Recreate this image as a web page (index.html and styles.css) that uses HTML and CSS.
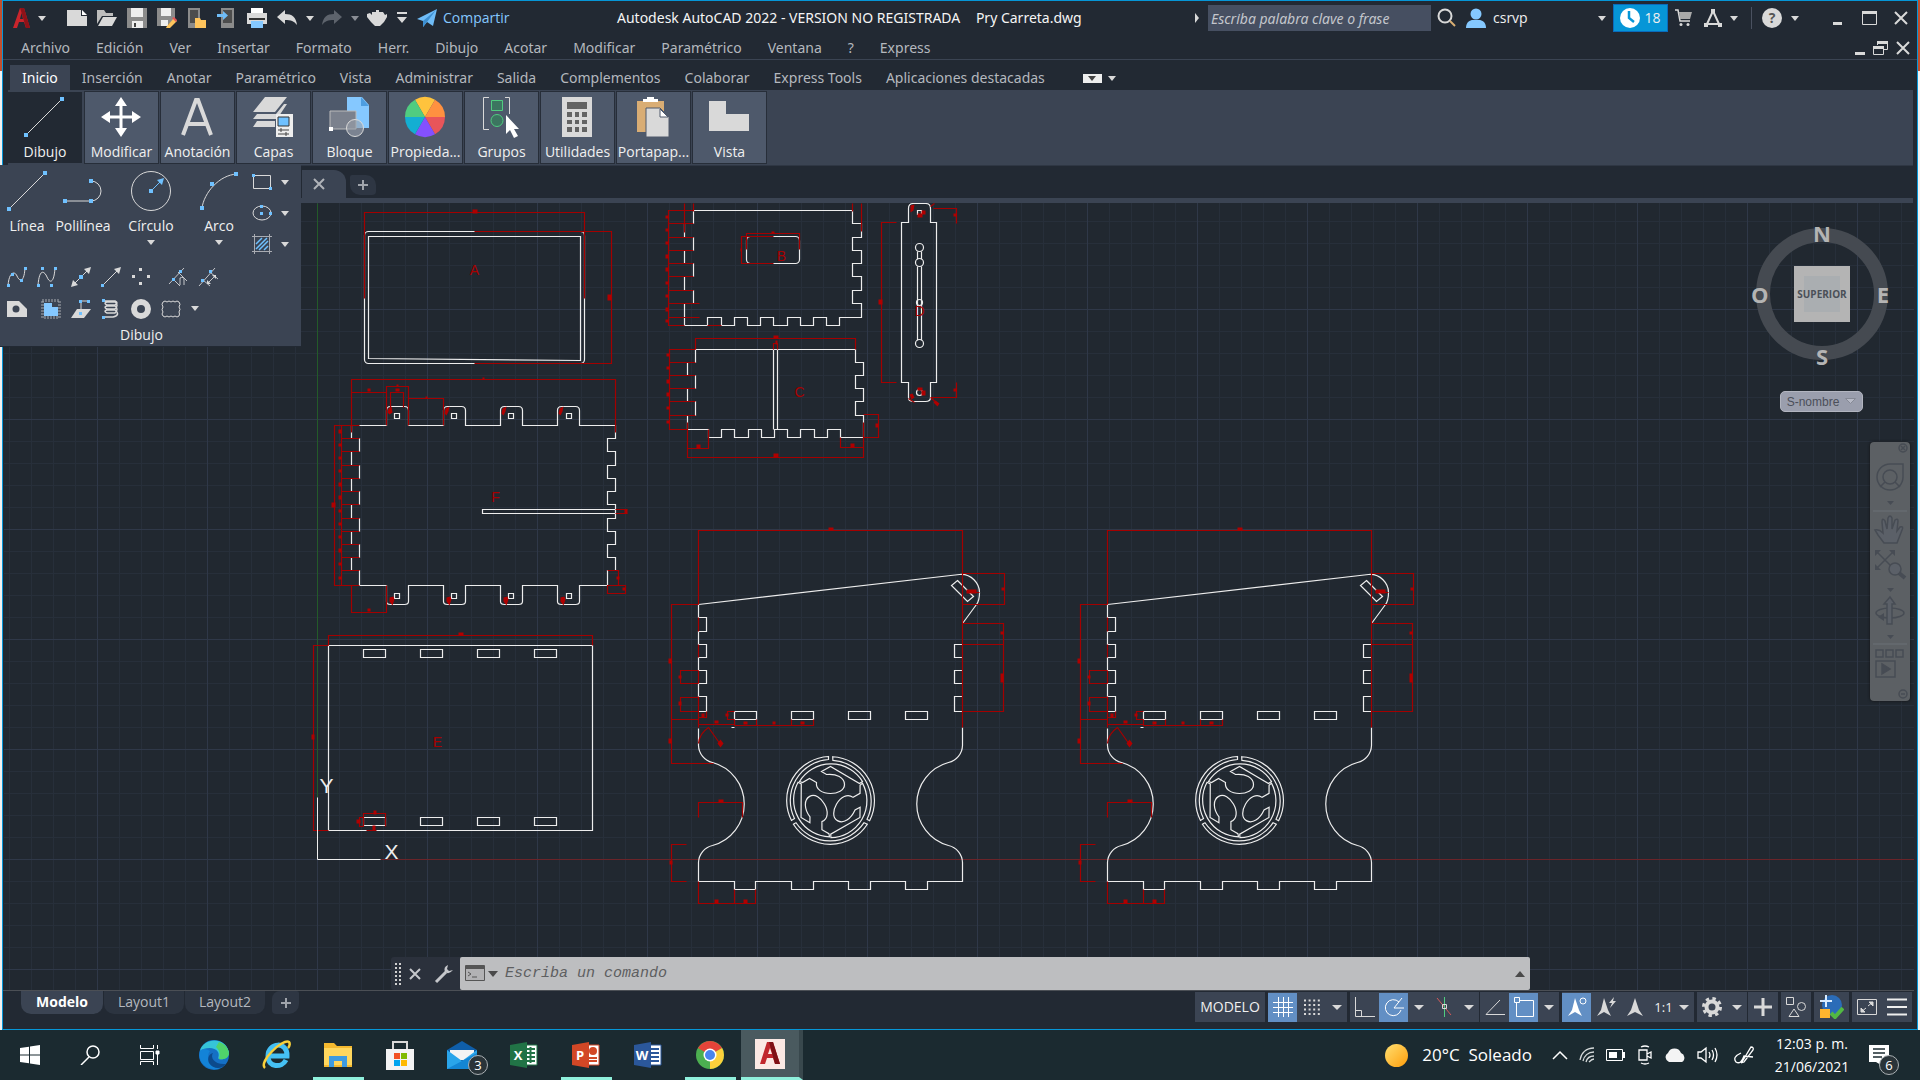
FILE: index.html
```html
<!DOCTYPE html>
<html lang="es">
<head>
  <meta charset="UTF-8" />
  <title>Autodesk AutoCAD 2022 - Pry Carreta.dwg</title>
  <link rel="stylesheet" href="styles.css">
</head>
<body>
<div class="desktop">
  <div class="app">

    <!-- Barra de título -->
    <header class="titlebar">
      <div class="quick">
        <button class="app-logo" aria-label="Menú de la aplicación">
          <svg width="18" height="22" viewBox="0 0 18 22"><path d="M0 21L7 1h4l6 20h-4l-2-6H6l-2 6z" fill="#c9252c"/><path d="M7 1h4l6 20h-4L8 4z" fill="#8e1218"/><path d="M7 12h3L8.500 6z" fill="#222933"/></svg>
          <i class="caret"></i>
        </button>
        <button aria-label="Nuevo"><svg width="20" height="20"><path d="M0 2h14v6h6v10H0z" fill="#d9d9d9"/><path d="M15 2l5 5h-5z" fill="#fff"/></svg></button>
        <button aria-label="Abrir"><svg width="20" height="20"><path d="M0 2h7l2 3h7v3H5L0 16z" fill="#bdbdbd"/><path d="M6 9h14l-5 9H1z" fill="#d9d9d9"/></svg></button>
        <button aria-label="Guardar"><svg width="20" height="20"><path d="M0 0h20v20H0z" fill="#8b8b8b"/><path d="M4 0h12v9H4zM5 13h11v7H5z" fill="#eee"/><path d="M7 15h2v4H7z" fill="#444"/></svg></button>
        <button aria-label="Guardar como"><svg width="20" height="20"><path d="M0 0h18v10l-8 8H0z" fill="#8b8b8b"/><path d="M4 0h10v8H4zM4 12h7v6H4z" fill="#eee"/><path d="M10 18l7-8 3 3-7 7-4 0z" fill="#ffc45c"/><path d="M17 9l3 3-1 2-4-4z" fill="#e45656"/></svg></button>
        <button aria-label="Abrir desde web"><svg width="20" height="20"><path d="M1 0h12v20H1z" fill="#8b8b8b"/><path d="M3 2h8v13H3z" fill="#4d4d4d"/><path d="M8 10h5l1 2h5v8H8z" fill="#ffc45c"/></svg></button>
        <button aria-label="Guardar en web"><svg width="20" height="20"><path d="M4 0h13v20H4z" fill="#8b8b8b"/><path d="M6 2h9v13H6z" fill="#4d4d4d"/><path d="M0 6h6V3l5 4.500L6 12V9H0z" fill="#6fbcf7"/></svg></button>
        <button aria-label="Imprimir"><svg width="20" height="20"><path d="M4 0h12v6H4z" fill="#fff"/><path d="M0 5h20v11H0z" fill="#d9d9d9"/><path d="M2 10h16v2H2z" fill="#333"/><path d="M4 13h12v7H4z" fill="#85c8ff"/></svg></button>
        <button aria-label="Deshacer"><svg width="20" height="20"><path d="M0 9l8-7v4c7 0 11 3 12 11-3-4-6-5-12-5v4z" fill="#d9d9d9"/></svg></button>
        <i class="caret"></i>
        <button aria-label="Rehacer"><svg width="20" height="20"><path d="M20 9l-8-7v4C5 6 1 9 0 17c3-4 6-5 12-5v4z" fill="#5d636c"/></svg></button>
        <i class="caret dim-caret"></i>
        <button aria-label="Renderizar"><svg width="20" height="20"><path d="M9 2h3v2h4l2 3 2-1v3l-3 5-4 4H8l-4-4-4-5V6l3-1 2 2V4h4z" fill="#d9d9d9"/></svg></button>
        <button class="more" aria-label="Personalizar"><svg width="10" height="14"><path d="M0 1h10v2H0zM0 6h10l-5 6z" fill="#d9d9d9"/></svg></button>
        <button class="share"><svg width="20" height="20"><path d="M0 11L20 1l-4 17-6-4-4 5V13z" fill="#6fbcf7"/><path d="M6 13l13-11-9 12-4 5z" fill="#3d8fd1"/></svg>Compartir</button>
      </div>
      <h1>Autodesk AutoCAD 2022 - VERSION NO REGISTRADA <span>Pry Carreta.dwg</span></h1>
      <div class="session">
        <svg width="5" height="10"><path d="M0 0l4 5-4 5z" fill="#d9d9d9"/></svg>
        <input class="search" type="text" aria-label="Buscar" placeholder="Escriba palabra clave o frase">
        <button class="find" aria-label="Buscar ayuda"><svg width="20" height="20" fill="none"><circle cx="8" cy="8" r="6.500" stroke="#d9d9d9" stroke-width="2"/><path d="M13 13l5 5" stroke="#d9ae73" stroke-width="2"/></svg></button>
        <button class="user"><svg width="20" height="20"><circle cx="10" cy="6" r="5.500" fill="#85c8ff"/><path d="M0 20c0-6 4-8 7-8h6c3 0 7 2 7 8z" fill="#85c8ff"/></svg><span>csrvp</span><i class="caret"></i></button>
        <button class="trial"><svg width="20" height="20" fill="none"><circle cx="10" cy="10" r="10" fill="#fff"/><path d="M9 3v7l5 4" stroke="#0696d7" stroke-width="2.500"/></svg>18</button>
        <button class="cart" aria-label="Tienda"><svg width="17" height="18" fill="none"><path d="M0 1h3l2 11h10" stroke="#d9d9d9" stroke-width="1.500"/><path d="M4 3h13l-2 7H5z" fill="#a9a9a9"/><circle cx="6" cy="15.500" r="1.500" fill="#d9d9d9"/><circle cx="13" cy="15.500" r="1.500" fill="#d9d9d9"/></svg></button>
        <button class="hub" aria-label="Aplicaciones"><svg width="20" height="20" fill="none" stroke="#d9d9d9" stroke-linejoin="round"><path d="M10 3L4 16h12z" stroke-width="2"/><path d="M10 1v4M1 17h4M15 17h4" stroke-width="4"/></svg><i class="caret"></i></button>
        <button class="help" aria-label="Ayuda"><svg width="20" height="20"><circle cx="10" cy="10" r="10" fill="#d9d9d9"/><text x="10" y="15" font-size="14" font-weight="bold" text-anchor="middle" fill="#555">?</text></svg><i class="caret"></i></button>
        <div class="win">
          <button aria-label="Minimizar"><svg width="14" height="14"><path d="M2 11h9v3H2z" fill="#d9d9d9"/></svg></button>
          <button aria-label="Maximizar"><svg width="15" height="14"><path d="M.5 1v12.500h14V1z" fill="none" stroke="#d9d9d9" /><path d="M0 0h15v3H0z" fill="#d9d9d9"/></svg></button>
          <button aria-label="Cerrar"><svg width="14" height="14"><path d="M1 1l12 12M13 1L1 13" stroke="#d9d9d9" stroke-width="2"/></svg></button>
        </div>
      </div>
    </header>

    <!-- Menú -->
    <nav class="menubar">
      <a href="#">Archivo</a><a href="#">Edición</a><a href="#">Ver</a><a href="#">Insertar</a><a href="#">Formato</a><a href="#">Herr.</a><a href="#">Dibujo</a><a href="#">Acotar</a><a href="#">Modificar</a><a href="#">Paramétrico</a><a href="#">Ventana</a><a href="#">?</a><a href="#">Express</a>
      <div class="docwin">
        <button aria-label="Minimizar dibujo"><svg width="10" height="14"><path d="M0 11h10v3H0z" fill="#d9d9d9"/></svg></button>
        <button aria-label="Restaurar dibujo"><svg width="15" height="14" fill="none" stroke="#d9d9d9"><path d="M4.500 4V1h10v7.500H11M.5 6v7.500h10V6"/><path d="M4 1.500h11M0 6.500h11" stroke-width="3"/></svg></button>
        <button aria-label="Cerrar dibujo"><svg width="14" height="14"><path d="M1 1l12 12M13 1L1 13" stroke="#d9d9d9" stroke-width="2"/></svg></button>
      </div>
    </nav>

    <!-- Cinta de opciones -->
    <nav class="tabs">
      <a class="active" href="#">Inicio</a><a href="#">Inserción</a><a href="#">Anotar</a><a href="#">Paramétrico</a><a href="#">Vista</a><a href="#">Administrar</a><a href="#">Salida</a><a href="#">Complementos</a><a href="#">Colaborar</a><a href="#">Express Tools</a><a href="#">Aplicaciones destacadas</a>
      <button class="ribbon-mode" aria-label="Minimizar cinta"><span><i class="caret dark"></i></span><i class="caret"></i></button>
    </nav>
    <div class="ribbon">
      <button class="open"><svg width="40" height="40"><path d="M2 38L38 2" stroke="#d9d9d9"/><path d="M0 36h4v4H0zM36 0h4v4h-4z" fill="#6fc1ff"/></svg>Dibujo</button>
      <button><svg width="40" height="40"><path d="M18.500 8h3v10.500H32v3H21.500V32h-3V21.500H8v-3h10.500z" fill="#fff"/><path d="M20 0l6 9H14zM20 40l6-9H14zM0 20l9-6v12zM40 20l-9-6v12z" fill="#fff"/></svg>Modificar</button>
      <button><svg width="40" height="40" fill="none" stroke="#d9d9d9" stroke-width="4"><path d="M6 38L19 3h2l13 35M11 27h18"/></svg>Anotación</button>
      <button><svg width="40" height="40"><path d="M12 0h22L22 15H0zM4 17h19l8-10h3L24 22H0zM4 24h18v6H0z" fill="#d9d9d9"/><path d="M23 17h17v23H23z" fill="#eee"/><path d="M25 20h11v9H25z" fill="#6fc1ff" stroke="#333"/><path d="M25 33h11M25 37h11M28 31v4M33 35v4" stroke="#444"/></svg>Capas</button>
      <button><svg width="40" height="40"><path d="M18 0h15l7 8v23H18z" fill="#85c8ff"/><path d="M32 0v9h8z" fill="#4d9de0"/><path d="M1 14h26v18H1z" fill="#7b818d" stroke="#bbb"/><circle cx="26" cy="31" r="8.500" fill="#9aa0aa" fill-opacity=".6" stroke="#d9d9d9"/><path d="M0 30h4v4H0z" fill="#fff"/></svg>Bloque</button>
      <button><svg width="40" height="40"><g transform="translate(20 20)"><path d="M0 0L-10-17.300A20 20 0 0 1 10-17.300z" fill="#ffc33d"/><path d="M0 0L10-17.300A20 20 0 0 1 20 0z" fill="#ff9140"/><path d="M0 0H20A20 20 0 0 1 10 17.300z" fill="#e8555a"/><path d="M0 0L10 17.300A20 20 0 0 1-10 17.300z" fill="#8450ff"/><path d="M0 0L-10 17.300A20 20 0 0 1-20 0z" fill="#14aed2"/><path d="M0 0H-20A20 20 0 0 1-10-17.300z" fill="#50cc80"/></g></svg>Propieda...</button>
      <button><svg width="40" height="40" fill="none"><path d="M8 .5H2.500v32H8M24 .5h4.500V17" stroke="#d9d9d9"/><path d="M10.500 3.500h11v10h-11z" fill="#3c7560" stroke="#50cc80"/><circle cx="16" cy="23.500" r="6" fill="#3c7560" stroke="#50cc80"/><path d="M25 18v19l4-4 4 8 4-2-4-7h5z" fill="#fff"/></svg>Grupos</button>
      <button><svg width="40" height="40"><path d="M5 0h30v40H5z" fill="#d9d9d9"/><path d="M10 5h20v7H10zM10 15h5v5h-5zM18 15h4v5h-4zM25 15h5v5h-5zM10 23h5v4h-5zM18 23h4v4h-4zM25 23h5v4h-5zM10 30h5v5h-5zM18 30h4v5h-4zM25 30h5v5h-5z" fill="#636363"/></svg>Utilidades</button>
      <button><svg width="40" height="40"><path d="M4 4h27v31H4z" fill="#d9ad74"/><path d="M10 5V2h4V0h7v2h4v3z" fill="#fff"/><path d="M13 11h14l9 9v20H13z" fill="#d9d9d9" stroke="#4e596b"/><path d="M27 12v8h8z" fill="#fff" stroke="#4e596b"/></svg>Portapap...</button>
      <button><svg width="40" height="40"><path d="M0 4h17v13h23v17H0z" fill="#d9d9d9"/></svg>Vista</button>
    </div>

    <div class="filetabs">
      <button class="doc" aria-label="Cerrar Pry Carreta.dwg"><svg width="12" height="12"><path d="M1 1l10 10M11 1L1 11" stroke="#b0b3b8" stroke-width="2"/></svg></button>
      <button class="plus" aria-label="Nuevo dibujo"><svg width="12" height="12"><path d="M6 1v10M1 6h10" stroke="#a0a4ab" stroke-width="2"/></svg></button>
    </div>

    <!-- Panel Dibujo desplegado -->
    <section class="flyout">
      <div class="tools">
        <button><svg width="40" height="40"><path d="M2 38L38 2" stroke="#d9d9d9"/><path d="M0 36h4v4H0zM36 0h4v4h-4z" fill="#6fc1ff"/></svg>Línea</button>
        <button><svg width="40" height="40" fill="none"><path d="M2 30h26a10 10 0 0 0 0-20" stroke="#d9d9d9"/><path d="M0 28h4v4H0zM26 28h4v4h-4zM26 8h4v4h-4z" fill="#6fc1ff"/></svg>Polilínea</button>
        <button><svg width="40" height="40" fill="none"><circle cx="20" cy="20" r="19.500" stroke="#d9d9d9"/><path d="M20 20L31 9" stroke="#6fc1ff"/><path d="M18 18h4v4h-4zM33 7l-2 7-5-5z" fill="#6fc1ff"/></svg>Círculo<i class="caret"></i></button>
        <button><svg width="40" height="40" fill="none"><path d="M3 37C5 22 20 4 38 3" stroke="#d9d9d9"/><path d="M1 35h4v4H1zM11 11h4v4h-4zM35 1h4v4h-4z" fill="#6fc1ff"/></svg>Arco<i class="caret"></i></button>
        <div class="shapes">
          <button aria-label="Rectángulo"><svg width="20" height="20" fill="none"><path d="M1.500 3.500h17v13h-17z" stroke="#d9d9d9"/><path d="M0 2h3v3H0zM17 15h3v3h-3z" fill="#6fc1ff"/></svg><i class="caret"></i></button>
          <button aria-label="Elipse"><svg width="20" height="20" fill="none"><ellipse cx="10" cy="10" rx="9" ry="7" stroke="#d9d9d9"/><path d="M8 2h3v3H8zM17 9h3v3h-3zM8 9h3v3H8z" fill="#6fc1ff"/></svg><i class="caret"></i></button>
          <button aria-label="Sombreado"><svg width="20" height="20" fill="none"><path d="M0 2.500h20M0 17.500h20M2.500 0v20M17.500 0v20" stroke="#a9acb2"/><path d="M4 10l6-6M4 15L15 4M7 16l9-9M12 16l4-4" stroke="#6fc1ff" stroke-width="1.500"/></svg><i class="caret"></i></button>
        </div>
      </div>
      <div class="small first">
        <button aria-label="Spline ajuste"><svg width="20" height="20" fill="none"><path d="M1 19C2 4 8 4 10 9s7 8 8-8" stroke="#d9d9d9"/><path d="M0 17h3v3H0zM4 6h3v3H4zM13 12h3v3h-3zM17 0h3v3h-3z" fill="#6fc1ff"/></svg></button>
        <button aria-label="Spline vértices"><svg width="20" height="20" fill="none"><path d="M1 19C2 2 7 3 10 10s7 6 8-9" stroke="#d9d9d9"/><path d="M0 17h3v3H0zM4 0h3v3H4zM13 17h3v3h-3zM17 0h3v3h-3z" fill="#6fc1ff"/></svg></button>
        <button aria-label="Línea auxiliar"><svg width="20" height="20"><path d="M2 18L18 2" stroke="#d9d9d9"/><path d="M0 20l2-7 5 5zM20 0l-2 7-5-5z" fill="#d9d9d9"/><path d="M8 8h4v4H8z" fill="#6fc1ff"/></svg></button>
        <button aria-label="Rayo"><svg width="20" height="20"><path d="M2 18L18 2" stroke="#d9d9d9"/><path d="M20 0l-2 7-5-5z" fill="#d9d9d9"/><path d="M0 17h3v3H0z" fill="#6fc1ff"/></svg></button>
        <button aria-label="Punto múltiple"><svg width="20" height="20"><path d="M8 1h3v3H8zM8 15h3v3H8zM1 8h3v3H1zM16 8h3v3h-3z" fill="#d9d9d9"/></svg></button>
        <button aria-label="Dividir"><svg width="20" height="20" fill="none"><path d="M1 17L16 1M10 5l9 9M5 12l7 7M12 18v-7q4-2 4 2v5" stroke="#c5c7cb"/><path d="M4 11h3v3H4zM11 3h3v3h-3z" fill="#6fc1ff"/></svg></button>
        <button aria-label="Graduar"><svg width="20" height="20" fill="none"><path d="M1 19L17 1M12 5l8 7M5 13l7 6M9 17l8-8" stroke="#c5c7cb"/><path d="M14 8l4 0 0 4zM9 13v4h4z" fill="#d9d9d9"/><path d="M3 12h3v3H3zM11 3h3v3h-3z" fill="#6fc1ff"/></svg></button>
      </div>
      <div class="small">
        <button aria-label="Región"><svg width="20" height="20"><path d="M0 2h12l8 8v8H0z" fill="#d9d9d9"/><circle cx="9" cy="10" r="3.500" fill="#3b4453"/></svg></button>
        <button aria-label="Contorno"><svg width="20" height="20" fill="none"><path d="M1.500 1.500h17v17h-17z" stroke="#a9acb2" stroke-width="3" stroke-dasharray="1 2"/><path d="M3 4h8v4h6v9H3z" fill="#85c8ff"/></svg></button>
        <button aria-label="Cobertura"><svg width="20" height="20" fill="none"><path d="M6 10h14l-7 9H0z" fill="#d9d9d9"/><path d="M10 15V2h8" stroke="#d9d9d9"/><path d="M8 1h3v3H8zM16 1h3v3h-3zM8 13h3v3H8z" fill="#6fc1ff"/></svg></button>
        <button aria-label="Hélice"><svg width="20" height="20" fill="none" stroke="#d9d9d9"><path d="M4 2h10q4 2 0 4H6q-4-2 0-3h8q4 3 0 7H6q-4-2 0-3h8q4 3 0 7H6q-4-2 0-3h8q6 5-2 7H3" stroke-width="1.500"/><path d="M1 0h3v3H1zM1 17h3v3H1z" fill="#6fc1ff" stroke="none"/></svg></button>
        <button aria-label="Arandela"><svg width="20" height="20"><circle cx="10" cy="10" r="7" fill="none" stroke="#d9d9d9" stroke-width="6"/></svg></button>
        <button aria-label="Nube de revisión"><svg width="20" height="20" fill="none" stroke="#d9d9d9"><path d="M2 3q2-2 4 0 2-2 4 0 2-2 4 0 2-2 4 0 2 2 0 5 2 2 0 5 1 2 0 4-2 2-4 0-2 2-4 0-2 2-4 0-2 2-4 0-2-2 0-4-2-2 0-5-2-3 0-5z"/></svg></button>
        <i class="caret"></i>
      </div>
      <h2>Dibujo</h2>
    </section>

    <!-- Área de dibujo -->
    <main class="canvas">
      <svg class="drawing" width="100%" height="100%">
        <defs>
          <pattern id="minor" width="22" height="22" patternUnits="userSpaceOnUse" x="317" y="859"><path d="M.5 0v22M0 .5h22" stroke="#272f3a"/></pattern>
          <pattern id="major" width="110" height="110" patternUnits="userSpaceOnUse" x="317" y="859"><path d="M.5 0v110M0 .5h110" stroke="#2f3848" stroke-width="1"/></pattern>
          <g id="blade">
            <path d="M-2-44A44 44 0 0 0-39 20L-36 18A41 41 0 0 1-2-41z"/>
            <path d="M-31-19A37 37 0 0 1 32-19L29-17 0-34-9-29-4-26C6-27 14-23 14-16 14-10 7-7 0-7-8-7-15-11-14-18L-21-22-28-18z"/>
          </g>
          <!-- lateral de la carreta con sus cotas -->
          <g id="side">
            <g class="ink">
              <path d="M698 604L959 574C971 573 979 583 979 592Q979 600 976 604L962 623M698 604V617H706V631H698V644H706V657H698V670H706V683H698V696H706V711H698M698 728V745A18 18 0 0 0 712 762A43 43 0 0 1 712 845A18 18 0 0 0 698 862V881H734V889H755V881H791V889H813V881H848V889H870V881H905V889H927V881H962V862A18 18 0 0 0 948 845A43 43 0 0 1 948 762A18 18 0 0 0 962 745V727"/>
              <path d="M962 644H954V657H962M962 670H954V683H962M962 696H954V711H962M957 580L973 596 967 601 951 585z"/>
              <path d="M734 711h22v8h-22zM791 711h22v8h-22zM848 711h22v8h-22zM905 711h22v8h-22zM731 727h3"/>
              <g transform="translate(830 800)"><use href="#blade"/><use href="#blade" transform="rotate(120)"/><use href="#blade" transform="rotate(240)"/></g>
            </g>
            <g class="dim">
              <path d="M698 604V530H962V727M962 573H1004V604H962M962 623H1003V711H962M962 644H1003"/>
              <path d="M698 604H671V763H713M671 719H698M698 670H680V683H698M698 697H680V711H698M698 617V631M698 644V657M698 670V683M698 696V727M698 717H706V711M698 724H734M734 719V725H813V719M756 719V725M791 719V725M734 711H727V719H734M698 743Q699 733 708 727L720 744"/>
              <path d="M698 817V802H742V817M686 844H671V881H686M698 881V903H755V889M734 889V903M972 592H979"/>
            </g>
            <path class="mark" d="M828 527h5v3h-5zM1001 587h3v3h-3zM966 589h10v4h-10zM1000 631h3v3h-3zM1000 673h3v9h-3zM668 658h3v5h-3zM668 738h3v5h-3zM678 675h3v3h-3zM678 701h3v4h-3zM714 720h4v3h-4zM743 721h4v3h-4zM772 721h3v3h-3zM800 721h4v3h-4zM701 713h3v4h-3zM725 713h3v3h-3zM720 739l3 4-3 4-3-4zM718 799h5v3h-5zM669 860h3v4h-3zM714 899h4v4h-4zM743 899h4v4h-4z"/>
          </g>
        </defs>

        <g transform="translate(-3 -203)">
          <rect x="4" y="203" width="100%" height="100%" fill="url(#minor)"/>
          <rect x="4" y="203" width="100%" height="100%" fill="url(#major)"/>
        </g>
        <g transform="translate(-2.500 -202.500)">
          <path d="M317 203V797" stroke="#235a29" stroke-width="1"/>
          <path d="M380 859H1914" stroke="#6b2429"/>

          <!-- A -->
          <g class="ink">
            <rect x="364" y="231" width="220" height="132" rx="4"/>
            <path d="M368 236H580V360L368 358z"/>
          </g>
          <g class="dim">
            <path d="M364 298V212H584V298M474 231H611V363H474"/>
          </g>
          <path class="mark" d="M472 209h5v4h-5zM607 294h4v6h-4z"/>
          <text class="tag" x="474" y="274">A</text>

          <!-- F -->
          <g class="ink">
            <path d="M351 425H386V410Q386 406 390 406H404Q408 406 408 410V425H443V410Q443 406 447 406H461Q465 406 465 410V425H500V410Q500 406 504 406H518Q522 406 522 410V425H557V410Q557 406 561 406H575Q579 406 579 410V425H615V438H607V451H615V465H607V478H615V491H607V504H615V518H607V531H615V544H607V557H615V570H607V585H579V601Q579 604 575 604H561Q557 604 557 601V585H522V601Q522 604 518 604H504Q500 604 500 601V585H465V601Q465 604 461 604H447Q443 604 443 601V585H408V601Q408 604 404 604H390Q386 604 386 601V585H359V570H351V557H359V544H351V531H359V518H351V504H359V491H351V478H359V465H351V451H359V438H351z"/>
            <path d="M615 509H482V513H615M394 413h5v5h-5zM451 413h5v5h-5zM508 413h5v5h-5zM566 413h5v5h-5zM394 593h5v5h-5zM451 593h5v5h-5zM508 593h5v5h-5zM566 593h5v5h-5z"/>
          </g>
          <g class="dim">
            <path d="M351 432V379H615V432M351 392H386M386 425V386H408V425M390 407V392H403V407M408 398H443V425M359 425H334V585H359M341 425V585M341 438H359M341 451H359M341 465H359M341 478H359M341 491H359M341 504H359M341 518H359M341 531H359M341 544H359M341 557H359M341 570H359M351 585V612H386V585M615 509H627M615 513H627M607 570H618V585M607 585H625V593H607z"/>
          </g>
          <path class="mark" d="M482 377h2v2h-2zM367 388h3v3h-3zM395 388h4v3h-4zM396 384h2v2h-2zM425 396h2v2h-2zM331 502h4v5h-4zM338 429h3v4h-3zM338 443h3v3h-3zM338 456h3v3h-3zM338 469h3v3h-3zM338 482h3v4h-3zM338 495h3v4h-3zM338 509h3v3h-3zM338 522h3v3h-3zM338 535h3v3h-3zM338 548h3v4h-3zM338 562h3v3h-3zM338 576h3v3h-3zM367 608h3v3h-3zM624 509h3v4h-3zM616 576h3v3h-3zM622 587h3v3h-3zM388 408l3-2 1 6-3 2-2-2zM445 408l4-2-1 5-2 4-2-2zM502 408l4-2-1 5-2 4-2-2zM559 408l4-2-1 5-2 4-2-2zM389 597l4-1 1 3-2 6-3-4zM446 597l4-1 1 3-2 6-3-4zM503 597l4-1 1 3-2 6-3-4zM560 597l4-1 1 3-2 6-3-4z"/>
          <text class="tag" x="495" y="501">F</text>

          <!-- E -->
          <g class="ink">
            <path d="M328 645H592V830H328zM363 649h22v8h-22zM420 649h22v8h-22zM477 649h22v8h-22zM534 649h22v8h-22zM363 817h22v8h-22zM420 817h22v8h-22zM477 817h22v8h-22zM534 817h22v8h-22z"/>
          </g>
          <g class="dim">
            <path d="M328 645V635H592V645M328 645H313V830H328M363 826V813H385V826M363 817H359V826H363M366 830H376"/>
          </g>
          <path class="mark" d="M458 632h5v3h-5zM311 734h3v5h-3zM373 810h3v4h-3zM356 819h4v4h-4zM372 825h3v5h-3z"/>
          <text class="tag" x="437" y="746">E</text>

          <!-- B -->
          <g class="ink">
            <path d="M693 210H852V223H861V237H852V250H861V263H852V276H861V290H852V303H861V317H839V325H826V317H813V325H800V317H787V325H773V317H760V325H747V317H734V325H721V317H707V325H684V303H693V290H684V276H693V263H684V250H693V237H684V223H693z"/>
            <rect x="746" y="236" width="53" height="27" rx="4"/>
          </g>
          <g class="dim">
            <path d="M684 203V232M693 203V211M852 203V211M861 203V231M693 210H668V325H684M668 223H693M668 237H693M668 250H693M668 263H693M668 276H693M668 290H693M668 303H699M668 317H699M707 325H721M746 249V233H799V249M773 236H741V263H773"/>
          </g>
          <path class="mark" d="M665 215h3v3h-3zM665 228h3v3h-3zM665 241h3v3h-3zM665 254h3v4h-3zM665 267h3v4h-3zM665 281h3v3h-3zM665 294h3v3h-3zM665 307h3v4h-3zM665 319h3v3h-3zM771 231h3v2h-3zM740 248h1v3h-1z"/>
          <text class="tag" x="781" y="260">B</text>

          <!-- C -->
          <g class="ink">
            <path d="M695 349H855V362H863V375H855V388H863V401H855V415H863V437H840V429H827V437H814V429H800V437H787V429H774V437H761V429H748V437H734V429H721V437H708V429H687V415H695V401H687V388H695V375H687V362H695zM773 349V429M777 349V429"/>
          </g>
          <g class="dim">
            <path d="M695 349V338H855V349M773 349V343H777V349M695 349H669V429H687M669 362H695M669 375H695M669 388H695M669 401H695M669 415H695M687 422V457H863V422M687 448H708V429M840 437V447H863M863 414H878V437H863"/>
          </g>
          <path class="mark" d="M773 335h5v3h-5zM775 340h2v4h-2zM666 353h3v3h-3zM666 366h3v3h-3zM666 379h3v4h-3zM666 392h3v4h-3zM666 406h3v3h-3zM666 420h3v3h-3zM696 444h4v4h-4zM850 443h4v4h-4zM773 453h5v4h-5zM875 423h3v4h-3z"/>
          <text class="tag" x="799" y="396">C</text>

          <!-- D -->
          <g class="ink">
            <path d="M908 222V208Q908 203 913 203H925Q930 203 930 208V222H936V382H930V397Q930 401 925 401H913Q908 401 908 397V382H901V222zM917 251V259M921 251V259M917 266V340M921 266V340M917 210h4v4h-4z"/>
            <circle cx="919" cy="247" r="4"/><circle cx="919" cy="262" r="4"/><circle cx="919" cy="302" r="3"/><circle cx="919" cy="343" r="4"/><circle cx="919" cy="392" r="3"/>
          </g>
          <g class="dim">
            <path d="M896 222H881V382H896M933 208H956V223M956 382V397H930M930 397L937 403M930 206L934 203M908 398L914 402"/>
          </g>
          <path class="mark" d="M878 299h4v5h-4zM953 213h3v3h-3zM953 388h3v3h-3zM910 205l4-1-1 6-3 2zM921 210h4v4h-4zM917 213h5v4h-5zM917 387h5v3h-5zM921 390h4v5h-4zM909 394l3-1 2 4-3 2zM935 400l4 3-2 3-4-4z"/>
          <text class="tag" x="919" y="315">D</text>

          <use href="#side"/>
          <use href="#side" x="409"/>

          <!-- icono SCP -->
          <path d="M317 797V859H380" fill="none" stroke="#eee"/>
          <text class="ucs" x="326" y="792">Y</text>
          <text class="ucs" x="391" y="858">X</text>
        </g>
      </svg>

      <div class="viewcube">
        <span class="n">N</span><span class="w">O</span><span class="e">E</span><span class="s">S</span>
        <button>SUPERIOR</button>
      </div>
      <button class="ucs-name">S-nombre <svg width="11" height="7"><path d="M.5.5h10l-5 5z" fill="#b6b9c6" stroke="#858995"/></svg></button>

      <div class="navbar">
        <svg width="40" height="259" fill="none" stroke="#474c54" stroke-width="1.500">
          <circle cx="33" cy="6" r="4"/><path d="M31 4l4 4M35 4l-4 4"/>
          <path d="M20 22h13v13a13 13 0 1 1-13-13z"/><circle cx="20" cy="35" r="7"/><path d="M15 40l-5 5M25 40l5 5"/>
          <path d="M17 59h7l-3.500 4z" fill="#474c54" stroke="none"/><path d="M3 69h34" stroke="#6b7076" stroke-width="1"/>
          <path d="M14 101l-6-8-3-5q4-1 8 3l-1-11q0-5 3-1l2 8 1-11q2-4 4 0v11l3-9q3-2 3 1l-1 10 3-4q4-1 2 3l-5 13z" fill="#5b6068"/>
          <path d="M6 109l18 18M24 109L6 127"/><path d="M5 108h6l-6 6zM25 108h-6l6 6zM5 128v-6l6 6z" fill="#474c54" stroke="none"/><circle cx="25" cy="127" r="6" fill="#5b6068"/><path d="M29 131l6 5" stroke-width="4"/>
          <path d="M17 146h7l-3.500 4z" fill="#474c54" stroke="none"/>
          <ellipse cx="20" cy="171" rx="14" ry="5"/><path d="M17 182v-20h-3l6-7 5 7h-3v20z" fill="#5b6068"/><path d="M8 175l6-4v8z" fill="#474c54" stroke="none"/>
          <path d="M17 193h7l-3.500 4z" fill="#474c54" stroke="none"/><path d="M3 202h34" stroke="#6b7076" stroke-width="1"/>
          <path d="M6 208h7v7H6zM16 208h7v7h-7zM26 208h7v7h-7zM6 219h19v16H6z"/><path d="M12 222l8 5-8 5z" fill="#474c54"/>
          <circle cx="33" cy="252" r="4"/><path d="M31 252h4"/>
        </svg>
      </div>

      <div class="command">
        <svg width="6" height="22"><path d="M1 0v22M5 0v22" stroke="#d0d0d0" stroke-width="2" stroke-dasharray="2 2"/></svg>
        <button aria-label="Cerrar línea de comandos"><svg width="12" height="12"><path d="M1 1l10 10M11 1L1 11" stroke="#c5c7cb" stroke-width="2"/></svg></button>
        <button aria-label="Personalizar"><svg width="20" height="20" fill="none"><path d="M2 18L12 8" stroke="#c5c7cb" stroke-width="3"/><path d="M14 1q-5 2-3 7 4 3 8-2l-4 1-2-2z" fill="#c5c7cb"/></svg></button>
        <div class="entry">
          <svg width="33" height="17"><path d="M.5.5h19v15H.5z" fill="#b2b2b4" stroke="#555"/><path d="M1 1h19v3H1z" fill="#555"/><path d="M3 7l3 2-3 2M7 12h5" fill="none" stroke="#555"/><path d="M23 6h10l-5 6z" fill="#4a4a4a"/></svg>
          <input type="text" aria-label="Comando" placeholder="Escriba un comando">
          <svg width="10" height="6"><path d="M0 6h10L5 0z" fill="#4a4a4a"/></svg>
        </div>
      </div>
    </main>

    <!-- Barra de estado -->
    <footer class="status">
      <nav class="layouts">
        <a class="active" href="#">Modelo</a><a href="#">Layout1</a><a href="#">Layout2</a>
        <button aria-label="Nueva presentación"><svg width="12" height="12"><path d="M6 1v10M1 6h10" stroke="#a0a4ab" stroke-width="2"/></svg></button>
      </nav>
      <div class="toggles">
        <div><button class="model">MODELO</button></div>
        <div>
          <button class="on" aria-label="Rejilla"><svg width="20" height="20"><path d="M5.500 0v20M10.500 0v20M15.500 0v20M0 5.500h20M0 10.500h20M0 15.500h20" stroke="#fff"/></svg></button>
          <button aria-label="Forzar cursor"><svg width="16" height="16"><path d="M0 1.500h16M0 6h16M0 10.500h16M0 15h16" stroke="#d9d9d9" stroke-width="2" stroke-dasharray="2 2.600"/></svg></button>
          <i class="caret big"></i>
        </div>
        <div>
          <button aria-label="Orto"><svg width="20" height="20" fill="none" stroke="#d9d9d9"><path d="M.5 0v19.500H20M.5 13.500h6v6"/></svg></button>
          <button class="on" aria-label="Rastreo polar"><svg width="20" height="20" fill="none" stroke="#fff"><path d="M15 5A8 8 0 1 0 17 13M10 11L18 1M10 11h10"/></svg></button>
          <i class="caret big"></i>
          <button aria-label="Isométrico"><svg width="20" height="20" fill="none"><path d="M3 1l14 17" stroke="#d05a5a"/><path d="M10.500 0v20" stroke="#50cc80"/><path d="M8.500 7.500h4v4h-4z" stroke="#d9d9d9"/></svg></button>
          <i class="caret big"></i>
        </div>
        <div class="joined">
          <button aria-label="Rastreo de referencia"><svg width="20" height="20" fill="none" stroke="#d9d9d9"><path d="M20 17.500H1L15 3"/></svg></button>
          <button class="on" aria-label="Referencia a objetos"><svg width="20" height="20" fill="none" stroke="#fff"><path d="M5 3.500h14.500v16h-17V6"/><path d="M.5.500h5v5h-5z"/></svg></button>
          <i class="caret big"></i>
        </div>
        <div>
          <button class="on" aria-label="Visibilidad de anotación"><svg width="20" height="20"><path d="M8 1l4 12 3 6-7-4-7 4 4-6z" fill="#fff"/><circle cx="16" cy="4" r="3" fill="none" stroke="#fff"/></svg></button>
          <button aria-label="Escala automática"><svg width="20" height="20"><path d="M8 1l4 12 3 6-7-4-7 4 4-6z" fill="#d9d9d9"/><path d="M18 0l-5 6h3l-2 5 6-7h-3z" fill="#d9d9d9"/></svg></button>
          <button aria-label="Escala de anotación"><svg width="20" height="20"><path d="M10 1l4 12 4 6-8-4-8 4 4-6z" fill="#d9d9d9"/></svg></button>
          <button class="scale">1:1<i class="caret big"></i></button>
        </div>
        <div>
          <button aria-label="Espacio de trabajo"><svg width="20" height="20" fill="none" stroke="#d9d9d9"><circle cx="10" cy="10" r="5.500" stroke-width="4"/><circle cx="10" cy="10" r="8.500" stroke-width="3" stroke-dasharray="3.400 3.300"/></svg></button>
          <i class="caret big"></i>
        </div>
        <div class="wide joined"><button aria-label="Monitor de anotación"><svg width="20" height="20"><path d="M10 1v18M1 10h18" stroke="#d9d9d9" stroke-width="3"/></svg></button></div>
        <div class="wide"><button aria-label="Aislar objetos"><svg width="20" height="20" fill="none" stroke="#d9d9d9"><path d="M.5.500h7v7h-7zM8 12l5 7.500H3z"/><circle cx="15.500" cy="9.500" r="4"/></svg></button></div>
        <div><button class="web" aria-label="Rendimiento gráfico"><svg width="24" height="24"><circle cx="12" cy="10" r="10" fill="#2b6cb8"/><path d="M0 14h10v9H0z" fill="#ffb52e"/><path d="M6 0v12M0 6h12" stroke="#d9ecff" stroke-width="2"/><path d="M11 18l4 4 8-9" fill="none" stroke="#52b943" stroke-width="4"/></svg></button></div>
        <div class="wide">
          <button aria-label="Limpiar pantalla"><svg width="20" height="16" fill="none" stroke="#d9d9d9"><path d="M.5.500h19v15H.5zM11 7l5-4M4 13l5-4"/><path d="M12 3h4v4zM4 9v4h4z" fill="#d9d9d9"/></svg></button>
          <button aria-label="Personalización"><svg width="20" height="18"><path d="M0 1.500h20M0 9h20M0 16.500h20" stroke="#eee" stroke-width="2"/></svg></button>
        </div>
      </div>
    </footer>
  </div>
</div>

<!-- Barra de tareas -->
<div class="taskbar">
  <div class="apps">
    <button class="sys" aria-label="Inicio"><svg width="20" height="20"><path d="M0 3l9-1.300V9.500H0zM10 1.500L20 0v9.500H10zM0 10.500h9v7.800L0 17zM10 10.500h10V20l-10-1.500z" fill="#fff"/></svg></button>
    <button class="sys" aria-label="Buscar"><svg width="20" height="20" fill="none" stroke="#fff" stroke-width="1.500"><circle cx="13" cy="7" r="6"/><path d="M9 12l-8 8"/></svg></button>
    <button class="sys" aria-label="Vista de tareas"><svg width="20" height="20" fill="none" stroke="#fff"><path d="M.5 0v3.500h13V0M.5 6.500h13v8H.5zM.5 20v-3.500h13V20M17.500 0v4M17.500 9v11"/><path d="M16 6h3v3h-3z" fill="#fff"/></svg></button>
    <button class="first" aria-label="Edge"><svg width="30" height="30"><circle cx="15" cy="15" r="15" fill="#1570c5"/><path d="M1 11C4-2 26-4 30 12c0 6-6 8-10 7-2-1 1-3-1-7-4-6-14-4-18-1z" fill="#36c5d8"/><path d="M20 2c7 2 10 8 10 12-1 5-7 6-10 5 0-1 3-7-3-12z" fill="#50d26a"/><path d="M11 11c-4 5-2 15 10 18C8 31-2 22 1 11c3-3 6-2 10 0z" fill="#1383d8"/><path d="M14 13c-3 4 1 12 13 11-5 6-13 5-17-1-2-5 0-9 4-10z" fill="#0c4a8c"/></svg></button>
    <button aria-label="Internet Explorer"><svg width="30" height="30" fill="none"><path d="M7 16h19c1-15-19-14-19 0 0 12 14 12 18 4" stroke="#45c0f3" stroke-width="5"/><path d="M4 28C-3 22 22-2 28 2c1 1 1 4-1 6" stroke="#f8cf3a" stroke-width="2.500"/></svg></button>
    <button class="running" aria-label="Explorador de archivos"><svg width="28" height="24"><path d="M0 0h10l3 3h15v21H0z" fill="#f5b92f"/><path d="M0 5h28v17H0z" fill="#ffd75e"/><path d="M5 13h18v11h-5v-6h-8v6H5z" fill="#3e9be0"/></svg></button>
    <button aria-label="Microsoft Store"><svg width="28" height="30" fill="none"><path d="M7 10V2h14v8" stroke="#d9d9d9" stroke-width="2"/><path d="M0 9h28v21H0z" fill="#f3f3f3"/><path d="M8 13h6v6H8z" fill="#f25022"/><path d="M15 13h6v6h-6z" fill="#7fba00"/><path d="M8 20h6v6H8z" fill="#00a4ef"/><path d="M15 20h6v6h-6z" fill="#ffb900"/></svg></button>
    <button aria-label="Correo"><svg width="30" height="28"><path d="M0 9L15 0l15 9v19H0z" fill="#0f5ea9"/><path d="M3 9h24v10H3z" fill="#f4f4f4"/><path d="M0 9l15 11L30 9v19H0z" fill="#2aa5ea"/><path d="M0 28l30-16v16z" fill="#1486d4"/></svg><b class="badge">3</b></button>
    <button aria-label="Excel"><svg width="28" height="26"><path d="M14 3h13v20H14z" fill="#fff" stroke="#217346"/><path d="M16 7h9M16 11h9M16 15h9M16 19h9M20.500 5v16" stroke="#217346" stroke-width="2"/><path d="M0 3l17-3v26L0 23z" fill="#217346"/><text x="8" y="18" text-anchor="middle">X</text></svg></button>
    <button class="running" aria-label="PowerPoint"><svg width="28" height="26"><path d="M14 3h13v20H14z" fill="#fff" stroke="#d24726"/><circle cx="21" cy="9" r="4" fill="#d24726"/><path d="M17 16h8M17 19h8" stroke="#d24726" stroke-width="2"/><path d="M0 3l17-3v26L0 23z" fill="#d24726"/><text x="8" y="18" text-anchor="middle">P</text></svg></button>
    <button aria-label="Word"><svg width="28" height="26"><path d="M14 3h13v20H14z" fill="#fff" stroke="#2b579a"/><path d="M17 7h8M17 11h8M17 15h8M17 19h8" stroke="#2b579a" stroke-width="2"/><path d="M0 3l17-3v26L0 23z" fill="#2b579a"/><text x="8" y="18" text-anchor="middle">W</text></svg></button>
    <button class="running" aria-label="Chrome"><svg width="28" height="28"><circle cx="14" cy="14" r="14" fill="#4caf50"/><path d="M14 14L1.900 7A14 14 0 0 1 26.100 7z" fill="#e5443a"/><path d="M14 14L26.100 7A14 14 0 0 1 14 28z" fill="#fdd03b"/><circle cx="14" cy="14" r="6.500" fill="#fff"/><circle cx="14" cy="14" r="5" fill="#4a84ee"/></svg></button>
    <button class="current" aria-label="AutoCAD"><svg width="30" height="30"><path d="M0 0h30v30H0z" fill="#fbe9e4"/><path d="M5 25L12 3h6l7 22h-5l-2-6h-6l-2 6z" fill="#c1272d"/><path d="M14 3h4l7 22h-5z" fill="#7f1216"/><path d="M13 15h4l-2-6z" fill="#fbe9e4"/></svg></button>
  </div>
  <div class="tray">
    <button class="weather"><span class="sun"></span>20°C&nbsp; Soleado</button>
    <svg width="16" height="10" fill="none" stroke="#fff" stroke-width="1.500"><path d="M1 9l7-7 7 7"/></svg>
    <svg width="16" height="16" fill="none" stroke="#d5d9da" stroke-width="1.300"><path d="M1 13C2 6 7 1 15 1M4 14C5 9 9 5 15 5M7 15c1-4 4-6 8-6M10 15c1-1 3-3 5-3"/></svg>
    <svg width="20" height="12" fill="none"><path d="M.5.500h16v11H.5z" stroke="#fff"/><path d="M3 3h8v6H3zM17 3h2v6h-2z" fill="#fff"/></svg>
    <svg width="16" height="20" fill="none" stroke="#fff" stroke-width="1.300"><path d="M2 5h8v10H2zM10 9l4-2v6l-4-2M4 2q4-2 8 0M4 18q4 2 8 0"/></svg>
    <svg width="22" height="14"><path d="M5 14a5 5 0 0 1-1-9 7 7 0 0 1 13 0 5 5 0 0 1 1 9z" fill="#f4f4f4"/></svg>
    <svg width="22" height="18" fill="none" stroke="#fff" stroke-width="1.300"><path d="M1 6h3l5-4v14l-5-4H1zM12 6q2 3 0 6M15 4q3 5 0 10M18 2q4 7 0 14"/></svg>
    <svg class="pen" width="20" height="20" fill="none" stroke="#fff" stroke-width="1.300"><path d="M8 17L17 2q3 0 2 3l-9 12-3 1zM7 8q-9 4-5 9 5 3 8-6l9 1"/></svg>
    <time>12:03 p. m.<br>21/06/2021</time>
    <button class="notes" aria-label="Notificaciones"><svg width="20" height="20"><path d="M0 0h20v17h-8v3l-5-3H0z" fill="#fff"/><path d="M4 4h12M4 8h12M4 12h9" stroke="#1c2b31" stroke-width="1.500"/></svg><b class="badge">6</b></button>
  </div>
</div>
</body>
</html>
```

FILE: styles.css
```css
* { box-sizing: border-box; }
body { margin: 0; min-height: 100vh; display: flex; flex-direction: column; font-family: "Open Sans", "Noto Sans", sans-serif; font-size: 14px; line-height: 20px; color: #f0f0f0; background: #1b2a30; }
button { display: flex; align-items: center; justify-content: center; padding: 0; border: 0; background: none; color: inherit; font: inherit; }
a { color: inherit; text-decoration: none; }
svg { display: block; flex: none; }
h1, h2 { margin: 0; font-size: 14px; font-weight: normal; }
input { border: 0; padding: 0; min-width: 0; }

.caret { display: block; flex: none; border: 4px solid transparent; border-top: 5px solid #d9d9d9; border-bottom: 0; width: 8px; }
.caret.dim-caret { border-top-color: #8a8e95; }
.caret.dark { border-top-color: #444; }
.caret.big { border-width: 5px 5px 0; width: 10px; }

.desktop { flex: 1; display: flex; padding: 0 2px; background: linear-gradient(#c14f2d 71px, #f2f2f2 71px); }
.app { position: relative; flex: 1; min-width: 0; display: flex; flex-direction: column; background: #222933; border: 1px solid #0696d7; }

/* título */
.titlebar { display: flex; align-items: center; height: 34px; }
.quick { display: flex; align-items: center; gap: 10px; width: 614px; padding-left: 10px; }
.app-logo { gap: 7px; width: 44px; justify-content: flex-start; }
.quick .caret { margin: 0 -2px 0 -1px; }
.app-logo .caret { margin: 0; }
.more { width: 10px; }
.share { gap: 6px; color: #85c8ff; }
.titlebar h1 { color: #f5f5f5; font-family: "Noto Sans", sans-serif; white-space: nowrap; }
.titlebar h1 span { margin-left: 12px; }
.session { display: flex; align-items: center; margin-left: auto; padding-right: 9px; }
.search { width: 223px; height: 26px; margin-left: 8px; padding: 0 3px; background: #464f61; color: #eee; font: italic 14px "Noto Sans", sans-serif; }
.search::placeholder { color: #c3c6cc; opacity: 1; }
.find { margin-left: 6px; }
.user { margin-left: 9px; width: 140px; gap: 7px; }
.user .caret { margin-left: auto; }
.trial { width: 55px; height: 28px; margin-left: 7px; gap: 4px; background: #0696d7; border: 1px solid #0a6bbd; }
.cart { margin-left: 7px; }
.hub { margin-left: 11px; gap: 7px; }
.help { margin-left: 13px; padding-left: 10px; gap: 9px; border-left: 1px solid #4a5160; height: 22px; }
.win { display: flex; align-items: center; gap: 17px; margin-left: 32px; }

/* menú y pestañas */
.menubar { display: flex; align-items: center; gap: 26px; height: 25px; padding: 2px 7px 0 18px; color: #b4b8be; border-bottom: 1px solid #3b4453; font-family: "Noto Sans", sans-serif; }
.docwin { display: flex; gap: 8px; margin-left: auto; }
.tabs { display: flex; align-items: flex-end; height: 30px; padding-left: 7px; color: #b4b8be; font-family: "Noto Sans", sans-serif; }
.tabs a { height: 25px; padding: 3px 12px 0; }
.tabs .active { background: #3b4453; color: #fff; }
.ribbon-mode { height: 23px; margin-left: 26px; gap: 6px; }
.ribbon-mode span { display: flex; align-items: center; justify-content: center; width: 19px; height: 9px; background: #eee; }

.ribbon { display: flex; gap: 3px; height: 76px; margin: 0 4px 0 5px; padding: 2px 0; background: #3b4453; border-bottom: 1px solid #2f3744; }
.ribbon button { flex-direction: column; justify-content: flex-start; gap: 5px; width: 73px; padding: 5px 0; background: #4e596b; outline: 1px solid #272e39; white-space: nowrap; }
.ribbon svg { overflow: visible; margin-right: 2px; }
.ribbon .open { width: 74px; background: #222933; outline: 0; }

.filetabs { display: flex; align-items: flex-end; height: 37px; padding-left: 299px; border-bottom: 5px solid #3b4453; margin-right: 4px; }
.filetabs .doc { width: 44px; height: 28px; padding-right: 10px; background: #3b4453; border-radius: 0 12px 0 0; }
.filetabs .plus { width: 26px; height: 20px; margin: 0 0 3px 4px; background: #2e3643; border-radius: 2px 10px 4px 10px; }

/* panel flotante */
.flyout { position: absolute; z-index: 2; left: -3px; top: 164px; width: 301px; height: 182px; background: #3b4453; border-bottom: 1px solid #222933; }
.tools { display: flex; height: 96px; padding: 6px 0 0 4px; }
.tools > button { flex-direction: column; justify-content: flex-start; width: 66px; }
.tools > button:first-child { width: 46px; }
.tools > button:nth-child(3) { width: 70px; }
.tools > button svg { margin-bottom: 5px; }
.tools .caret { margin-top: 4px; }
.shapes { display: flex; flex-direction: column; gap: 11px; padding-top: 1px; }
.shapes button { gap: 9px; }
.shapes .caret { margin-top: 0; }
.small { display: flex; align-items: center; gap: 10px; height: 31px; padding: 0 0 0 7px; }
.small button:first-child { margin-right: 4px; }
.small.first button:first-child { margin-right: 0; }
.small.first button:nth-child(3) { margin-left: 4px; }
.small.first button:nth-child(6) { margin-left: 7px; }
.small:not(.first) { padding-top: 2px; }
.flyout h2 { padding: 2px 18px 0 0; text-align: center; line-height: 20px; }

/* dibujo */
.canvas { position: relative; flex: 1; min-height: 760px; margin-right: 3px; overflow: hidden; background: #212830; border-bottom: 1px solid #4b4f55; }
.drawing { position: absolute; inset: 0; }
.ink { fill: none; stroke: #ededed; stroke-width: 1.2; }
.dim { fill: none; stroke: #a40000; stroke-width: 1.2; }
.mark { fill: #b00000; }
.tag { font: 14px "Liberation Sans", sans-serif; fill: #a80000; text-anchor: middle; }
.ucs { font: 21px "Liberation Sans", sans-serif; fill: #eee; text-anchor: middle; }

.viewcube { position: absolute; top: 25px; right: 26px; width: 132px; height: 132px; border: 14px solid #454a51; border-radius: 50%; display: flex; align-items: center; justify-content: center; font-size: 22px; font-weight: bold; color: #b4b4b4; }
.viewcube span { position: absolute; line-height: 22px; }
.viewcube .n { top: -20px; }
.viewcube .s { bottom: -21px; }
.viewcube .w { left: -19px; }
.viewcube .e { right: -15px; }
.viewcube button { width: 56px; height: 56px; background: #aaaeb1; border: 10px solid #b4b4b4; color: #4a5058; font: bold 10px "Open Sans", sans-serif; }
.ucs-name { position: absolute; top: 188px; right: 51px; width: 83px; height: 21px; gap: 6px; background: #9a9ead; border: 1px solid #b2b5c0; border-radius: 5px; color: #4b4f5a; font: 12px "Liberation Sans", sans-serif; }
.navbar { position: absolute; top: 239px; right: 4px; border-radius: 4px; background: #5c6064; box-shadow: 0 0 3px #111; }

.command { position: absolute; left: 388px; right: 384px; bottom: 0; height: 33px; display: flex; align-items: center; background: #2b313c; padding: 0 0 0 4px; gap: 8px; border-radius: 3px; }
.entry { flex: 1; display: flex; align-items: center; height: 33px; margin-left: -2px; padding: 0 5px; gap: 7px; background: #bdbec0; border-radius: 2px; }
.command button + button { margin-left: 5px; }
.entry input { flex: 1; background: none; font: italic 15px "Liberation Mono", monospace; color: #333; }
.entry input::placeholder { color: #5e5f61; opacity: 1; }

/* estado */
.status { display: flex; justify-content: space-between; height: 38px; }
.layouts { display: flex; height: 23px; padding-left: 18px; color: #b4b8be; }
.layouts a { width: 81px; text-align: center; line-height: 22px; background: #2c3440; border-right: 1px solid #222933; border-radius: 0 0 10px 10px; }
.layouts a.active { background: #3b4453; color: #fff; font-weight: bold; width: 83px; }
.layouts button { width: 27px; margin-left: 6px; background: #2e3643; border-radius: 8px 2px 10px 4px; }
.toggles { display: flex; gap: 3px; height: 31px; padding: 1px 5px 0 0; }
.toggles > div { display: flex; align-items: center; background: #3b4453; }
.toggles .joined { margin-left: -2px; }
.toggles button { width: 29px; height: 29px; }
.toggles .wide button { width: 30px; }
.toggles .on { background: #628fc4; }
.toggles .caret { margin: 0 5px 0 6px; }
.toggles .model { width: 70px; }
.toggles .scale { width: 45px; font-size: 13px; }
.toggles .scale .caret { margin: 0 0 0 6px; }
.toggles .web { width: 35px; }

/* barra de tareas */
.taskbar { display: flex; justify-content: space-between; height: 50px; color: #fff; }
.apps { display: flex; }
.apps button { position: relative; width: 62px; height: 50px; }
.apps .sys { width: 60px; }
.apps .first { margin-left: 3px; }
.apps text { font: bold 13px "Open Sans", sans-serif; fill: #fff; }
.apps .running::after { content: ""; position: absolute; left: 6px; right: 5px; bottom: 0; height: 3px; background: #8ff0dc; }
.apps .current { background: #4a5a5f; border-right: 4px solid #39484d; border-bottom: 3px solid #8ff0dc; }
.badge { position: absolute; display: flex; align-items: center; justify-content: center; width: 20px; height: 20px; border: 1px solid #aab0b3; border-radius: 50%; background: #2a3439; font-size: 13px; font-weight: normal; }
.apps .badge { right: 5px; bottom: 5px; }
.tray { display: flex; align-items: center; gap: 11px; padding-right: 21px; }
.weather { gap: 14px; margin-right: 9px; font-size: 17px; }
.sun { width: 23px; height: 23px; border-radius: 50%; background: linear-gradient(135deg, #ffe072, #ff9d0a); }
.tray .pen { margin: 0 3px 0 4px; }
.tray time { width: 88px; text-align: center; line-height: 23px; }
.notes { position: relative; width: 30px; height: 34px; justify-content: flex-start; margin-left: 2px; }
.notes .badge { right: 0; bottom: -3px; }
```
